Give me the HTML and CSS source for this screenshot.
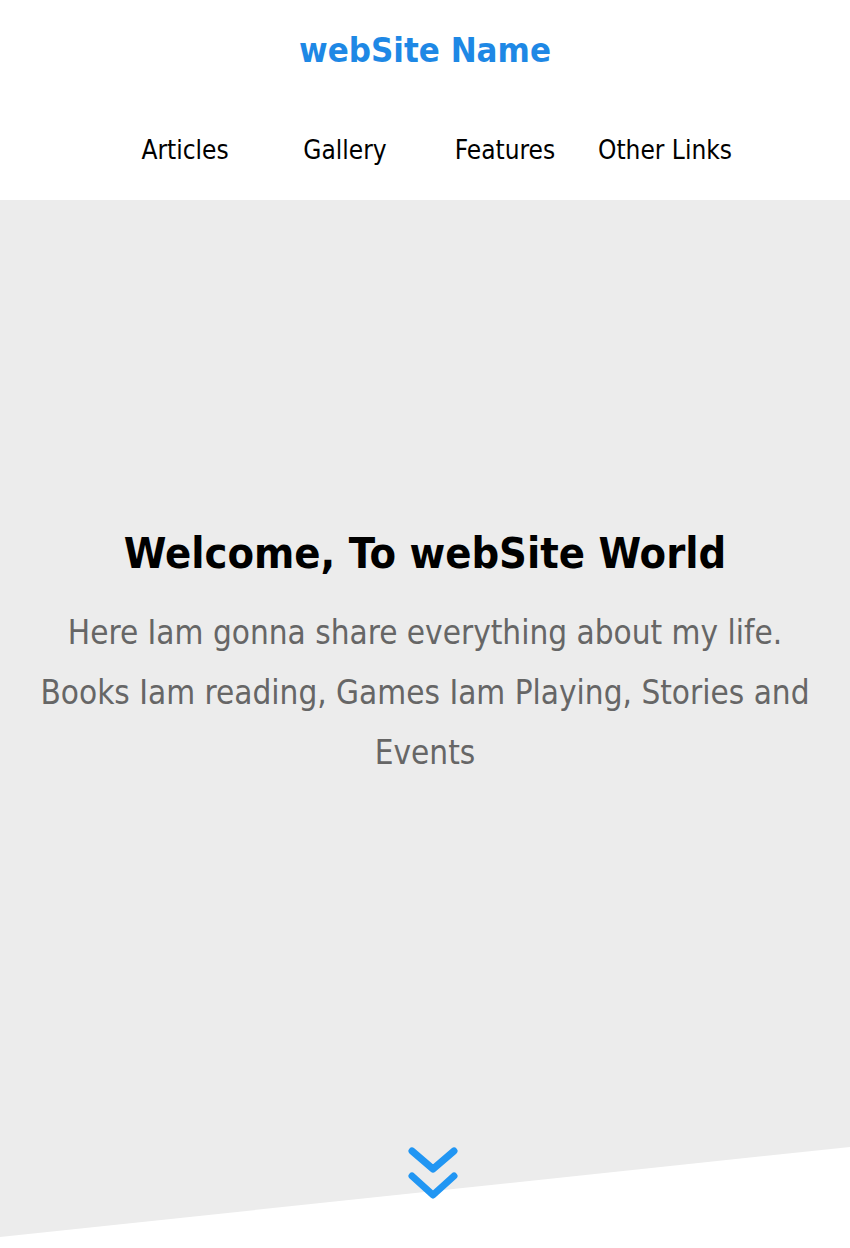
FILE: index.html
```html
<!DOCTYPE html>
<html lang="en">
<head>
<meta charset="utf-8">
<title>webSite Name</title>
<link rel="stylesheet" href="styles.css">
</head>
<body>
<header class="site-header">
  <div class="brand">webSite Name</div>
  <nav class="main-nav">
    <a class="nav-link" href="#">Articles</a>
    <a class="nav-link" href="#">Gallery</a>
    <a class="nav-link" href="#">Features</a>
    <a class="nav-link" href="#">Other Links</a>
  </nav>
</header>
<section class="hero">
  <div class="intro">
    <h1 class="intro-title">Welcome, To webSite World</h1>
    <p class="intro-text">Here Iam gonna share everything about my life. Books Iam reading, Games Iam Playing, Stories and Events</p>
  </div>
  <a class="scroll-down" href="#">
    <svg width="50" height="54" viewBox="0 0 50 54" aria-hidden="true">
      <polyline points="4,5 25,23 46,5" />
      <polyline points="4,30 25,49 46,30" />
    </svg>
  </a>
</section>
</body>
</html>
```
FILE: styles.css
```css
* { box-sizing: border-box; }
html, body { margin: 0; padding: 0; }
body {
  font-family: "DejaVu Sans Condensed", "Liberation Sans Narrow", "Roboto", sans-serif;
  background: #fff;
  color: #000;
}
.site-header {
  height: 200px;
  display: flex;
  flex-direction: column;
  align-items: center;
}
.brand {
  height: 100px;
  line-height: 100px;
  font-size: 34.5px;
  font-weight: bold;
  color: #1e88e5;
}
.main-nav {
  height: 100px;
  display: flex;
  justify-content: center;
  align-items: center;
}
.nav-link {
  width: 160px;
  text-align: center;
  font-size: 26px;
  color: #000;
  text-decoration: none;
}
.hero {
  position: relative;
  height: 1048px;
  display: flex;
  flex-direction: column;
  align-items: center;
  padding: 324px 30px 48px;
}
.hero::before {
  content: "";
  position: absolute;
  inset: 0;
  background: #ececec;
  clip-path: polygon(0 0, 100% 0, 100% 947px, 0 1037px);
}
.intro {
  position: relative;
  text-align: center;
}
.intro-title {
  margin: 0;
  font-size: 43px;
  line-height: 58px;
  font-weight: bold;
  color: #000;
}
.intro-text {
  margin: 21px 0 0;
  font-size: 33px;
  line-height: 60px;
  color: #666;
}
.scroll-down {
  position: relative;
  margin-top: auto;
  margin-left: 16px;
  display: block;
  width: 50px;
  height: 54px;
}
.scroll-down svg {
  display: block;
  fill: none;
  stroke: #2196f3;
  stroke-width: 7;
  stroke-linecap: round;
  stroke-linejoin: round;
}
```
